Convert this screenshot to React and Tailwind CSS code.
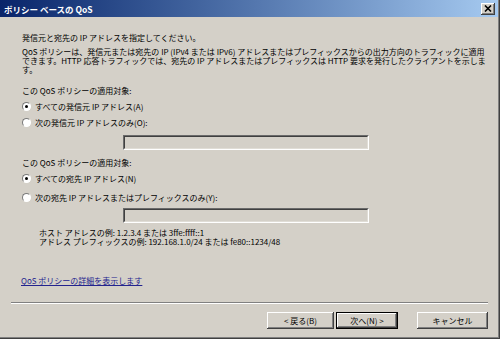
import React from "react";

const font = { fontFamily: '"Noto Sans CJK JP", "Noto Sans", sans-serif' };

function Radio({ checked }) {
  return (
    <div className="w-[9px] h-[9px] shrink-0 rounded-full bg-white border border-t-[#7a7a7a] border-l-[#7a7a7a] border-r-[#ffffff] border-b-[#ffffff] flex items-center justify-center">
      {checked && <div className="w-[3px] h-[3px] rounded-full bg-black" />}
    </div>
  );
}

function Line({ children, className = "" }) {
  return (
    <div className={"h-[9px] leading-[9px] whitespace-nowrap " + className}>{children}</div>
  );
}

function RadioRow({ checked, children, className = "" }) {
  return (
    <div className={"h-[12px] flex items-center gap-[4px] pl-[22px] whitespace-nowrap " + className}>
      <Radio checked={checked} />
      <span className="leading-[9px]">{children}</span>
    </div>
  );
}

function TextBox({ className = "" }) {
  return (
    <div className={"ml-[123px] w-[246px] h-[15px] border border-t-[#6a6a6a] border-l-[#6a6a6a] border-r-white border-b-white " + className}>
      <div className="w-full h-full border border-t-[#404040] border-l-[#404040] border-r-[#e0ddd6] border-b-[#e0ddd6]" />
    </div>
  );
}

function Button({ children, w, def = false }) {
  const inner = (
    <div className="w-full h-full flex items-center justify-center bg-[#d4d0c8] shadow-[inset_-1px_-1px_#404040,inset_1px_1px_#ffffff,inset_-2px_-2px_#808080]">
      <span className="leading-[9px] whitespace-nowrap">{children}</span>
    </div>
  );
  return (
    <div className={"h-[17px] " + (def ? "border border-black " : "") + w}>{inner}</div>
  );
}

export default function App() {
  return (
    <div className="w-[500px] h-[339px] border-r border-b border-[#404040] bg-[#d4d0c8] overflow-hidden">
      <div className="w-full h-full border-r border-b border-[#808080] flex flex-col text-[8px] text-black" style={font}>
        {/* title bar */}
        <div className="h-[17px] shrink-0 flex items-center justify-between pl-[4px] pr-[3px] bg-gradient-to-r from-[#0a246a] to-[#a6caf0]">
          <span className="text-white font-bold text-[8.5px] leading-[10px] whitespace-nowrap">ポリシー ベースの QoS</span>
          <div className="w-[14px] h-[12px] bg-[#d4d0c8] flex items-center justify-center shadow-[inset_-1px_-1px_#404040,inset_1px_1px_#ffffff,inset_-2px_-2px_#808080]">
            <svg width="8" height="7" viewBox="0 0 8 7">
              <path d="M1 0.5 L7 6.5 M7 0.5 L1 6.5" stroke="#000" strokeWidth="1.6" />
            </svg>
          </div>
        </div>

        <div className="flex flex-col">
          <Line className="mt-[16px] pl-[22px]">発信元と宛先の IP アドレスを指定してください。</Line>
          <div className="mt-[5px] pl-[22px]">
            <Line>QoS ポリシーは、発信元または宛先の IP (IPv4 または IPv6) アドレスまたはプレフィックスからの出力方向のトラフィックに適用</Line>
            <Line>できます。HTTP 応答トラフィックでは、宛先の IP アドレスまたはプレフィックスは HTTP 要求を発行したクライアントを示しま</Line>
            <Line>す。</Line>
          </div>

          <Line className="mt-[12px] pl-[22px]">この QoS ポリシーの適用対象:</Line>
          <RadioRow checked className="mt-[5px]">すべての発信元 IP アドレス(A)</RadioRow>
          <RadioRow className="mt-[4px]">次の発信元 IP アドレスのみ(O):</RadioRow>
          <TextBox className="mt-[7px]" />

          <Line className="mt-[8px] pl-[22px]">この QoS ポリシーの適用対象:</Line>
          <RadioRow checked className="mt-[5px]">すべての宛先 IP アドレス(N)</RadioRow>
          <RadioRow className="mt-[7px]">次の宛先 IP アドレスまたはプレフィックスのみ(Y):</RadioRow>
          <TextBox className="mt-[5px]" />

          <div className="mt-[5px] pl-[39px]">
            <Line>ホスト アドレスの例: 1.2.3.4 または 3ffe:ffff::1</Line>
            <Line>アドレス プレフィックスの例: 192.168.1.0/24 または fe80::1234/48</Line>
          </div>

          <Line className="mt-[30px] pl-[21px]">
            <span className="text-[#23238e] underline">QoS ポリシーの詳細を表示します</span>
          </Line>

          <div className="mt-[17px] ml-[11px] w-[477px] h-[2px] border-t border-t-[#808080] border-b border-b-white" />

          <div className="mt-[8px] flex justify-end pr-[10px]">
            <Button w="w-[67px]">&lt; 戻る(B)</Button>
            <div className="w-[2px]" />
            <Button w="w-[62px]" def>次へ(N) &gt;</Button>
            <div className="w-[19px]" />
            <Button w="w-[71px]">キャンセル</Button>
          </div>
        </div>
      </div>
    </div>
  );
}
